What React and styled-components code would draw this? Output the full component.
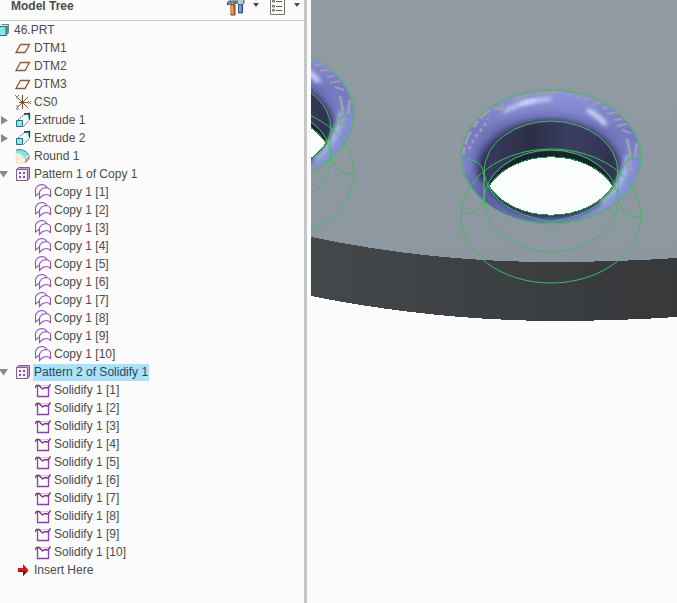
import React, { useState } from "react";
import styled, { createGlobalStyle } from "styled-components";

const GlobalStyle = createGlobalStyle`
  * {
    box-sizing: border-box;
  }
  body {
    margin: 0;
    background: #fbfbfb;
    font-family: "Liberation Sans", Arial, sans-serif;
    font-size: 12px;
    color: #4c4c4c;
  }
`;

const Layout = styled.div`
  display: grid;
  grid-template-columns: minmax(240px, 307fr) minmax(0, 366fr);
  gap: 4px;
  height: 100vh;
`;

const Panel = styled.aside`
  display: flex;
  flex-direction: column;
  min-width: 0;
  border-right: 3px solid #c6c6c6;
`;

const Header = styled.header`
  display: flex;
  align-items: flex-start;
  flex: none;
  height: 21px;
  padding: 0 4px 0 11px;
  overflow: hidden;
  border-bottom: 1px solid #c9c9c9;
`;

const Title = styled.h1`
  flex: 1;
  margin: 0;
  font-size: 12px;
  font-weight: bold;
  line-height: 12px;
`;

const Tools = styled.div`
  display: flex;
  gap: 10px;
`;

const ToolButton = styled.button`
  display: flex;
  align-items: flex-start;
  gap: 7px;
  height: 16px;
  padding: 0;
  border: 0;
  background: none;
  cursor: pointer;
`;

const Caret = styled.span`
  margin-top: 3px;
  border: 3px solid transparent;
  border-top: 4px solid #4a4a4a;
  border-bottom: 0;
`;

const Tree = styled.ul`
  margin: 0;
  padding: 0;
  list-style: none;
  overflow: auto;
`;

const Branch = styled.ul`
  margin: 0;
  padding: 0 0 0 ${(props) => (props.$indent ? "20px" : "0")};
  list-style: none;
`;

const Row = styled.div`
  display: flex;
  align-items: center;
  height: 18px;
`;

const Gutter = styled.span`
  flex: none;
  width: 15px;
`;

const Toggle = styled.button`
  display: flex;
  flex: none;
  width: 15px;
  height: 16px;
  padding: 4px 0 0;
  border: 0;
  background: none;
  cursor: pointer;
`;

const Label = styled.button`
  height: 17px;
  margin-left: 2px;
  padding: 0 1px;
  border: 0;
  font: inherit;
  line-height: 17px;
  white-space: nowrap;
  color: ${(props) => (props.$selected ? "#24495c" : "inherit")};
  background: ${(props) => (props.$selected ? "#abe1fa" : "none")};
  cursor: default;
`;

const Glyph = styled.svg`
  display: block;
  flex: none;
`;

const Viewport = styled.main`
  min-width: 0;
  overflow: hidden;
`;

const Drawing = styled.svg`
  display: block;
  width: 100%;
  height: 100%;
`;

const shapes = {
  part: (
    <>
      <path d="M-1 5L2 2H9V11L6 14H-1Z" fill="#5e8d92" />
      <path d="M-1 4.500H6V13.500H-1Z" fill="#7fe9ee" stroke="#3f6d72" />
      <path d="M0 4L1 3H8L7 4Z" fill="#c9f7f7" />
    </>
  ),
  plane: <path d="M5.5 4.5H14.5L10 12.5H1Z" fill="none" stroke="#8b5a36" strokeWidth="1.3" />,
  csys: (
    <>
      <path d="M7.500 1V15M7.500 8.500L3 4M7.500 8.500L13 3M7.500 8.500L3 13M7.500 8.500L13 14M4 8.500H13" stroke="#8b4f2b" fill="none" />
      <path d="M0 1L2 3L4 1M2 3V5M1 12H4L1 15H4M13 7L16 10M16 7L13 10" stroke="#777" fill="none" />
    </>
  ),
  extrude: (
    <>
      <path d="M2.5 8.500L9 2.5H14.5V8L8.500 14.5" fill="#eefbfb" stroke="#555" strokeDasharray="2 1" />
      <path d="M9 2L14.5 1.5V7" fill="none" stroke="#303838" strokeWidth="1.3" />
      <path d="M11 3L13.500 3V6" fill="none" stroke="#57bfc3" />
      <path d="M1.5 8.500H7.500V14.5H1.5Z" fill="#83edf0" stroke="#2e7076" />
    </>
  ),
  round: (
    <>
      <path d="M1 5H6L10 10V15H1Z" fill="#f7efe0" />
      <path d="M1 7V15H10" fill="none" stroke="#dfcda9" strokeDasharray="1 1" />
      <path d="M1 2Q9 0 13 7L9 11Q8 5 1 5Z" fill="#7ee5e8" />
      <path d="M1 2Q10 0 14 7.500V11L10 15" fill="none" stroke="#4d8085" />
      <path d="M10 11L14 8V11L10 15Z" fill="#aaa" />
    </>
  ),
  pattern: (
    <>
      <path d="M1.500 3.500L3.500 1.500H14.500V12.500L12.500 14.500H1.500Z" fill="#bfa2ce" stroke="#79608a" />
      <path d="M1.500 3.500H12.500V14.500H1.500Z" fill="#f6effb" stroke="#806594" />
      <path d="M4 6H6V8H4ZM8 6H10V8H8ZM4 10H6V12H4ZM8 10H10V12H8Z" fill="#8452a8" />
    </>
  ),
  copy: (
    <g fill="none" stroke="#9653b5" strokeWidth="1.1">
      <path d="M4.500 9L.500 12V5Q2 1 7 .500Q11 1 12 4" />
      <path d="M4.500 14.500V8Q6 4 11 3.500Q14 4 15.500 6V13Q14 10 11 10.500Q7 11 4.500 14.500Z" />
    </g>
  ),
  solidify: (
    <>
      <path d="M2.500 4V14.500H13.500V5" fill="none" stroke="#8c3fb1" strokeWidth="1.3" />
      <path d="M5 3.500H13" stroke="#c9b1d8" strokeDasharray="2 1" />
      <path d="M0 6L1.500 3.500H4L7.500 7L10 5.500L13 6L15.500 2.500" fill="none" stroke="#7c2d79" strokeWidth="1.3" />
    </>
  ),
  insert: (
    <>
      <path d="M3 6H8V2L13.500 8L8 14V10H3Z" fill="#e31313" />
      <path d="M3 9H13L8 14V10H3Z" fill="#7d1111" />
    </>
  ),
};

function Icon({ type }) {
  const width = type === "part" ? 11 : 16;
  return (
    <Glyph width={width} height="16" viewBox={`0 0 ${width} 16`} aria-hidden="true">
      {shapes[type]}
    </Glyph>
  );
}

function Arrow({ open }) {
  return (
    <Glyph width="9" height="9" viewBox="0 0 9 9" aria-hidden="true">
      <path d={open ? "M-1 1H8L3.500 7.500Z" : "M1 0V8.500L8 4.500Z"} fill="#898989" />
    </Glyph>
  );
}

const copies = (name, type) =>
  Array.from({ length: 10 }, (_, i) => ({ name: `${name} [${i + 1}]`, type }));

const model = {
  name: "46.PRT",
  type: "part",
  open: true,
  children: [
    { name: "DTM1", type: "plane" },
    { name: "DTM2", type: "plane" },
    { name: "DTM3", type: "plane" },
    { name: "CS0", type: "csys" },
    { name: "Extrude 1", type: "extrude", children: [] },
    { name: "Extrude 2", type: "extrude", children: [] },
    { name: "Round 1", type: "round" },
    { name: "Pattern 1 of Copy 1", type: "pattern", open: true, children: copies("Copy 1", "copy") },
    { name: "Pattern 2 of Solidify 1", type: "pattern", open: true, children: copies("Solidify 1", "solidify") },
    { name: "Insert Here", type: "insert" },
  ],
};

function Node({ node, root, selected, onSelect }) {
  const [open, setOpen] = useState(Boolean(node.open));

  return (
    <li>
      <Row>
        {!root && !node.children && <Gutter />}
        {!root && node.children && (
          <Toggle aria-label={`Toggle ${node.name}`} aria-expanded={open} onClick={() => setOpen(!open)}>
            <Arrow open={open} />
          </Toggle>
        )}
        <Icon type={node.type} />
        <Label $selected={selected === node.name} onClick={() => onSelect(node.name)}>
          {node.name}
        </Label>
      </Row>
      {open && node.children && (
        <Branch $indent={!root}>
          {node.children.map((child) => (
            <Node key={child.name} node={child} selected={selected} onSelect={onSelect} />
          ))}
        </Branch>
      )}
    </li>
  );
}

function SettingsIcon() {
  return (
    <Glyph width="20" height="16" viewBox="0 0 20 16" aria-hidden="true">
      <path d="M1 4Q2 0 5 1H10V4L8 3V6H5V3L2 5Z" fill="#7da0a4" stroke="#3d5154" />
      <path d="M5 5H9V15H5Z" fill="#e46b25" stroke="#913a16" />
      <path d="M6 5V14" stroke="#ffd39c" />
      <path d="M11 0V3L13 5H16L18 3V0" fill="#b6cbd0" stroke="#40545a" />
      <path d="M12.500 5H16.500V13H12.500Z" fill="#4f7fcb" stroke="#2d4e91" />
      <path d="M14 5V12" stroke="#a3c8f4" />
    </Glyph>
  );
}

function ListIcon() {
  return (
    <Glyph width="18" height="16" viewBox="0 0 18 16" aria-hidden="true">
      <path d="M1.500 -1H15.500V14.500H1.500Z" fill="#fbfbf5" stroke="#77776c" />
      <path d="M7 1.500H13M7 6.500H13M7 10.500H13" stroke="#5d5d58" />
      <path d="M3.500 .500H5.500V2H3.500ZM3.500 5.500H5.500V7H3.500ZM3.500 9.500H5.500V11H3.500Z" fill="#fff" stroke="#6c6c6c" />
    </Glyph>
  );
}

function Hole({ x, y }) {
  return (
    <g transform={`translate(${x} ${y})`}>
      <g clipPath="url(#rim)">
        <ellipse cx="0" cy="0" rx="90" ry="67" fill="url(#torus)" />
        <ellipse cx="-3" cy="14" rx="72" ry="50" fill="#25274a" filter="url(#soft)" />
        <path d="M-67 34V15A67 51 0 0 1 67 15V34Z" fill="url(#wall)" filter="url(#fine)" />
        <path d="M-64 29Q-42 -5 0 -6T64 29L60 32H-60Z" fill="#15242f" />
        {/* lower lip of the round */}
        <path d="M-92 12L-78 18L-63 30A67 50 0 0 0 63 30L72 10L92 -10V72H-92Z" fill="url(#lip)" filter="url(#fine)" />
        <path d="M-48 -45Q-27 -57 0 -58" fill="none" stroke="#dfe3ff" strokeWidth="3" filter="url(#fine)" />
        <path d="M-31 -53L-15 -57" stroke="#f2f4ff" strokeWidth="2" filter="url(#fine)" />
        <path d="M36 -47Q47 -42 55 -32" fill="none" stroke="#e6e9ff" strokeWidth="4" filter="url(#fine)" />
        <path d="M77 -2Q76 26 50 45" fill="none" stroke="#adbce6" strokeWidth="5" filter="url(#fine)" />
        {/* the top face showing through along the rim */}
        <g fill="none" stroke="#9a9eae" filter="url(#grain)">
          <path d="M-88 -2Q-84 -31 -58 -50" strokeWidth="3" strokeDasharray="8 3 14 5" />
          <path d="M-58 -49L-47 -48L-50 -53M-38 -57L-22 -62M-16 -62L6 -65" strokeWidth="3" />
          <path d="M-82 -8L-76 -20L-66 -32L-63 -39" strokeWidth="3" strokeDasharray="3 4" />
          <path d="M16 -61L23 -65M24 -59L33 -63M33 -57L44 -60M42 -52L52 -56M51 -48L60 -51M56 -43L68 -45M63 -37L71 -38M66 -31L76 -33M71 -27L80 -24" strokeWidth="2" />
          <path d="M76 -18L79 -4L76 10L82 14M86 -14L84 0" strokeWidth="3" />
        </g>
      </g>
      <path
        d="M-62 29A69 52 0 0 1 62 29A69 52 0 0 1 -62 29Z"
        fill="#fcfdfd"
        stroke="#269247"
        shapeRendering="crispEdges"
      />
      <g fill="none" stroke="#3fbc60" strokeWidth="1">
        <ellipse cx="0" cy="0" rx="90" ry="67" />
        <ellipse cx="0" cy="59" rx="90" ry="67" />
        <path d="M-67 44V15A67 51 0 0 1 67 15V44A67 51 0 0 1 -67 44A67 51 0 0 1 67 44" />
        <path d="M-67 15Q-62 54 0 65Q62 54 67 15" />
        <path d="M-90 3Q-70 0 -67 16V42Q-72 57 -90 57M90 3Q75 -1 73 8Q70 17 67 16M67 42Q71 60 90 60" />
      </g>
    </g>
  );
}

function Scene() {
  return (
    <Drawing viewBox="0 0 366 603" preserveAspectRatio="xMinYMin slice" role="img" aria-label="Part view">
      <defs>
        <linearGradient id="face" x2="0" y2="1">
          <stop offset="0" stopColor="#929ba2" />
          <stop offset="1" stopColor="#8d979f" />
        </linearGradient>
        <linearGradient id="edge">
          <stop offset="0" stopColor="#43484b" />
          <stop offset="1" stopColor="#36383a" />
        </linearGradient>
        <linearGradient id="torus" x2="0" y2="1">
          <stop offset="0" stopColor="#8f95dc" />
          <stop offset="0.3" stopColor="#7479c0" />
          <stop offset="0.6" stopColor="#7f86d2" />
          <stop offset="1" stopColor="#7380c4" />
        </linearGradient>
        <linearGradient id="lip">
          <stop offset="0" stopColor="#7c83cf" />
          <stop offset="0.14" stopColor="#5b60a0" />
          <stop offset="0.45" stopColor="#6f7ac6" />
          <stop offset="0.8" stopColor="#8996d4" />
          <stop offset="1" stopColor="#838ad6" />
        </linearGradient>
        <linearGradient id="wall">
          <stop offset="0" stopColor="#393c60" />
          <stop offset="0.35" stopColor="#2b2d47" />
          <stop offset="0.65" stopColor="#3c3e62" />
          <stop offset="1" stopColor="#30304f" />
        </linearGradient>
        <clipPath id="rim">
          <ellipse cx="0" cy="0" rx="89" ry="66" />
        </clipPath>
        <filter id="soft" x="-30%" y="-30%" width="160%" height="160%">
          <feGaussianBlur stdDeviation="6" />
        </filter>
        <filter id="fine" x="-30%" y="-50%" width="160%" height="200%">
          <feGaussianBlur stdDeviation="2" />
        </filter>
        <filter id="grain">
          <feGaussianBlur stdDeviation="0.6" />
        </filter>
      </defs>
      <path d="M0 0H366V262H0Z" fill="url(#face)" />
      <path
        d="M0 237Q120 262 240 262Q305 262 366 258V317Q305 321 240 321Q120 320 0 296Z"
        fill="url(#edge)"
        shapeRendering="crispEdges"
      />
      <Hole x={-47} y={114} />
      <Hole x={240} y={157} />
    </Drawing>
  );
}

function App() {
  const [selected, setSelected] = useState("Pattern 2 of Solidify 1");

  return (
    <Layout>
      <GlobalStyle />
      <Panel>
        <Header>
          <Title>Model Tree</Title>
          <Tools>
            <ToolButton aria-label="Settings">
              <SettingsIcon />
              <Caret />
            </ToolButton>
            <ToolButton aria-label="Show">
              <ListIcon />
              <Caret />
            </ToolButton>
          </Tools>
        </Header>
        <Tree>
          <Node node={model} root selected={selected} onSelect={setSelected} />
        </Tree>
      </Panel>
      <Viewport>
        <Scene />
      </Viewport>
    </Layout>
  );
}

export default App;
